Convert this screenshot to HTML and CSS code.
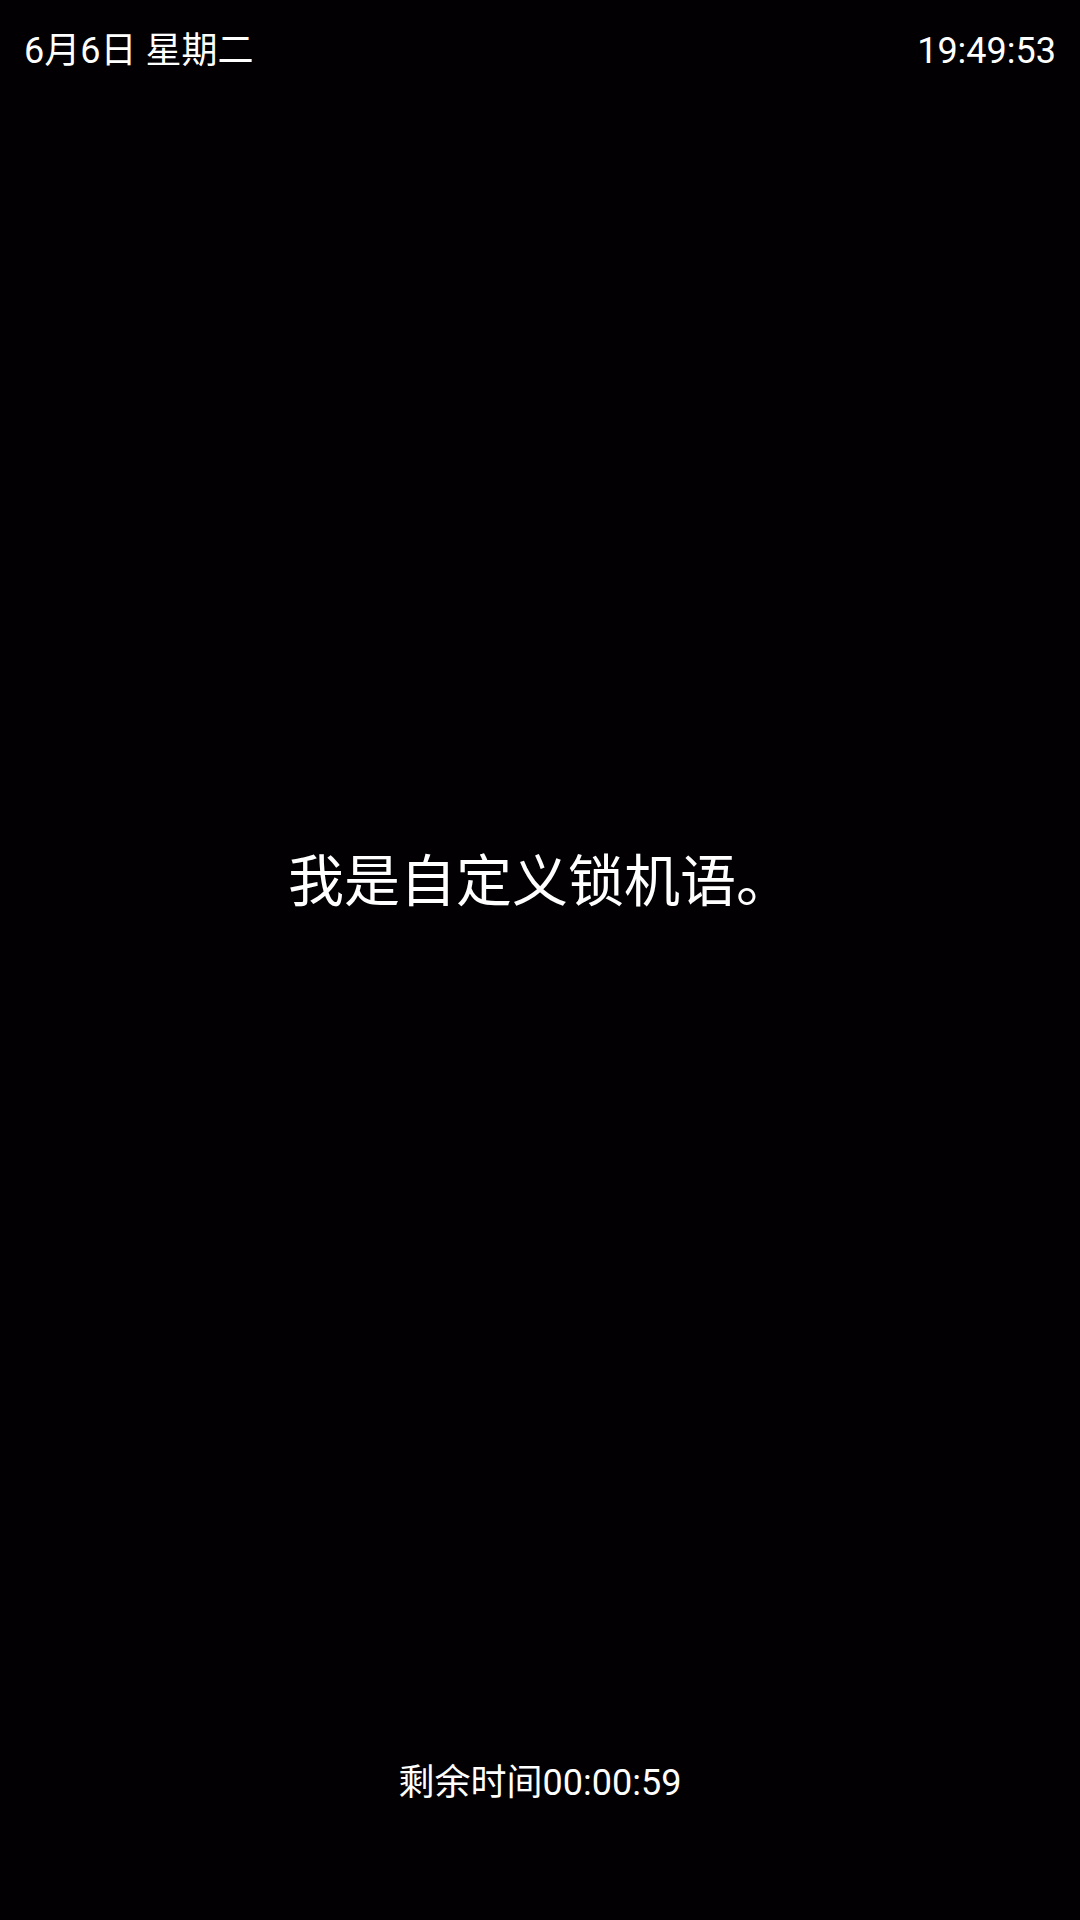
FILE: index.html
```html
<!DOCTYPE html>
<html lang="zh-CN">
<head>
<meta charset="utf-8">
<title>锁屏</title>
<link rel="stylesheet" href="styles.css">
</head>
<body>
<div class="screen">
  <header class="topbar">
    <span class="date">6月6日 星期二</span>
    <span class="clock">19:49:53</span>
  </header>
  <main class="center">
    <p class="motto">我是自定义锁机语。</p>
  </main>
  <footer class="bottom">
    <span class="remain">剩余时间00:00:59</span>
  </footer>
</div>
</body>
</html>
```
FILE: styles.css
```css
html, body {
  margin: 0;
  padding: 0;
  background: #020003;
}
.screen {
  width: 1080px;
  height: 1920px;
  display: flex;
  flex-direction: column;
  color: #ffffff;
  font-family: Roboto, "Noto Sans CJK SC", sans-serif;
}
.topbar {
  display: flex;
  justify-content: space-between;
  align-items: center;
  padding: 27px 24px 0 24px;
  height: 48px;
  font-size: 36px;
  line-height: 48px;
}
.center {
  flex: 1;
  display: flex;
  align-items: center;
  justify-content: center;
  padding-bottom: 71px;
}
.motto {
  margin: 0;
  font-size: 56px;
  line-height: 80px;
}
.bottom {
  display: flex;
  justify-content: center;
  height: 48px;
  padding-bottom: 113px;
  font-size: 36px;
  line-height: 48px;
}
```
